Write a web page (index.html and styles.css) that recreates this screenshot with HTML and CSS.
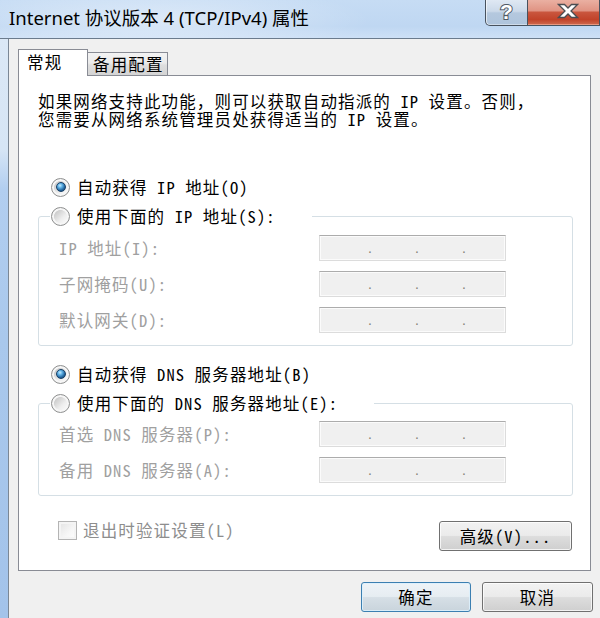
FILE: index.html
```html
<!DOCTYPE html>
<html lang="zh-CN">
<head>
<meta charset="utf-8">
<title>Internet 协议版本 4 (TCP/IPv4) 属性</title>
<link rel="stylesheet" href="styles.css">
</head>
<body>
<div class="window">
  <header class="titlebar">
    <div class="title">Internet 协议版本 4 (TCP/IPv4) 属性</div>
    <div class="caption-buttons">
      <div class="cap-btn help"><span class="help-glyph">?</span></div>
      <div class="cap-btn close">
        <svg class="close-x" width="22" height="16" viewBox="0 0 22 16">
          <path d="M1.5,1.5 H7.5 L11,5 L14.5,1.5 H20.5 L14,8 L20.5,14.5 H14.5 L11,11 L7.5,14.5 H1.5 L8,8 Z" fill="#ffffff" stroke="#4a4d52" stroke-width="1.3" stroke-linejoin="miter"/>
        </svg>
      </div>
    </div>
  </header>
  <div class="frame">
    <div class="frame-left"></div>
    <div class="client">
      <div class="tabs">
        <div class="tab active">常规</div>
        <div class="tab inactive">备用配置</div>
      </div>
      <div class="panel">
        <div class="intro">
          <div class="intro-line">如果网络支持此功能，则可以获取自动指派的 IP 设置。否则，</div>
          <div class="intro-line">您需要从网络系统管理员处获得适当的 IP 设置。</div>
        </div>

        <div class="radio standalone first"><span class="radio-box checked"></span><span>自动获得 IP 地址(O)</span></div>
        <fieldset class="group">
          <legend><span class="radio"><span class="radio-box"></span><span>使用下面的 IP 地址(S):</span></span></legend>
          <div class="rows">
            <span class="lbl">IP 地址(I):</span>
            <div class="ip"><span>.</span><span>.</span><span>.</span></div>
            <span class="lbl">子网掩码(U):</span>
            <div class="ip"><span>.</span><span>.</span><span>.</span></div>
            <span class="lbl">默认网关(D):</span>
            <div class="ip"><span>.</span><span>.</span><span>.</span></div>
          </div>
        </fieldset>

        <div class="radio standalone second"><span class="radio-box checked"></span><span>自动获得 DNS 服务器地址(B)</span></div>
        <fieldset class="group dns">
          <legend><span class="radio"><span class="radio-box"></span><span>使用下面的 DNS 服务器地址(E):</span></span></legend>
          <div class="rows">
            <span class="lbl">首选 DNS 服务器(P):</span>
            <div class="ip"><span>.</span><span>.</span><span>.</span></div>
            <span class="lbl">备用 DNS 服务器(A):</span>
            <div class="ip"><span>.</span><span>.</span><span>.</span></div>
          </div>
        </fieldset>

        <div class="bottom-row">
          <div class="check"><span class="check-box"></span><span>退出时验证设置(L)</span></div>
          <div class="btn adv">高级(V)...</div>
        </div>
      </div>
      <div class="buttons">
        <div class="btn ok">确定</div>
        <div class="btn cancel">取消</div>
      </div>
    </div>
  </div>
</div>
</body>
</html>
```
FILE: styles.css
```css
html, body {
  margin: 0;
  padding: 0;
}
body {
  width: 600px;
  height: 618px;
  overflow: hidden;
  background: #f0f0f0;
  font-family: "Noto Sans Mono CJK SC", "Noto Sans CJK SC", sans-serif;
  font-size: 16.5px;
  letter-spacing: 1.15px;
  color: #000;
}

.window {
  display: flex;
  flex-direction: column;
  height: 618px;
}

/* ---------- title bar ---------- */
.titlebar {
  flex: none;
  height: 38px;
  display: flex;
  border-bottom: 1px solid #6b7b8d;
  background:
    radial-gradient(ellipse 220px 34px at 150px 20px, rgba(255,255,255,0.45), rgba(255,255,255,0) 100%),
    linear-gradient(#c6dcf4 0%, #bfd7f2 70%, #cde0f6 100%);
}
.title {
  flex: 1;
  padding-left: 9px;
  font-family: "Noto Sans", "Noto Sans CJK SC", sans-serif;
  font-size: 18.5px;
  line-height: 36px;
  letter-spacing: 0;
  white-space: nowrap;
  color: #000;
}
.caption-buttons {
  display: flex;
  align-self: flex-start;
  height: 26px;
  flex: none;
}
.cap-btn {
  box-sizing: border-box;
  height: 26px;
  border: 1px solid #48525e;
  border-top: none;
}
.help {
  width: 43px;
  border-radius: 0 0 0 5px;
  background: linear-gradient(#dfe8f3 0%, #cbd9e9 45%, #b4c8de 52%, #aec4dc 100%);
  box-shadow: inset 1px 0 0 rgba(255,255,255,0.6), inset 0 -1px 0 rgba(255,255,255,0.4);
  display: flex;
  justify-content: center;
}
.help-glyph {
  font-family: "Liberation Sans", sans-serif;
  font-weight: bold;
  font-size: 21px;
  line-height: 23px;
  letter-spacing: 0;
  color: #ffffff;
  -webkit-text-stroke: 2px #505965;
  paint-order: stroke fill;
}
.close {
  width: 72px;
  border-left: none;
  background: linear-gradient(#eab0a2 0%, #e09484 42%, #c9553d 50%, #c1432a 78%, #cf6a4f 100%);
  box-shadow: inset 0 -1px 0 rgba(255,200,180,0.5);
}
.close-x {
  display: block;
  margin: 3px 0 0 29px;
}

/* ---------- frame ---------- */
.frame {
  flex: 1;
  display: flex;
  min-height: 0;
}
.frame-left {
  width: 8px;
  flex: none;
  background: linear-gradient(#dbe8f6 0px, #d6e5f5 110px, #b2cef0 150px, #a9c8ec 300px, #a3c3ea 100%);
}
.client {
  flex: 1;
  display: flex;
  flex-direction: column;
  border-left: 1px solid #7b8795;
  background: #f0f0f0;
}

/* ---------- tabs ---------- */
.tabs {
  display: flex;
  align-items: flex-end;
  height: 26px;
  margin: 10px 0 0 9px;
}
.tab {
  box-sizing: border-box;
  border: 1px solid #898c95;
  border-bottom: none;
  white-space: nowrap;
}
.tab.active {
  position: relative;
  z-index: 1;
  width: 70px;
  height: 27px;
  margin-bottom: -1px;
  padding-left: 8px;
  line-height: 24px;
  background: #ffffff;
}
.tab.inactive {
  width: 81px;
  height: 23px;
  margin-left: -1px;
  padding-left: 5px;
  line-height: 22px;
  background: linear-gradient(#f3f3f3 0%, #ebebeb 45%, #dedede 55%, #d4d4d4 100%);
}

/* ---------- panel ---------- */
.panel {
  box-sizing: border-box;
  width: 573px;
  height: 496px;
  margin-left: 9px;
  border: 1px solid #898c95;
  background: #ffffff;
  padding: 16px 17px 0 19px;
}
.intro {
  display: flex;
  flex-direction: column;
}
.intro-line {
  height: 18px;
  line-height: 18px;
  white-space: nowrap;
}

.radio {
  display: flex;
  align-items: center;
  gap: 7px;
  height: 22px;
  white-space: nowrap;
}
.radio.standalone {
  margin-left: 13px;
}
.radio.first {
  margin-top: 48px;
}
.radio.second {
  margin-top: 17px;
}
.radio-box {
  box-sizing: border-box;
  flex: none;
  width: 19px;
  height: 19px;
  border-radius: 50%;
  border: 1px solid #8e8f8f;
  background:
    radial-gradient(circle closest-side, rgba(255,255,255,0) 72%, #f6f6f6 80%),
    linear-gradient(135deg, #c4c4c4 15%, #eeeeee 60%, #ffffff 100%);
  display: grid;
  place-items: center;
}
.radio-box.checked::after {
  content: "";
  box-sizing: border-box;
  width: 10px;
  height: 10px;
  border-radius: 50%;
  border: 1px solid #173f66;
  background: radial-gradient(circle at 38% 32%, #c8ecff 0%, #5fb2e6 30%, #23649c 65%, #123a60 100%);
}

/* ---------- group boxes ---------- */
.group {
  margin: 7px 0 0;
  padding: 0;
  border: 1px solid #d5dfe5;
  border-radius: 3px;
  min-width: 0;
}
.group legend {
  margin-left: 11px;
  padding: 0 36px 0 1px;
}
.rows {
  display: grid;
  grid-template-columns: 260px 187px;
  row-gap: 10px;
  align-items: center;
  padding: 8px 0 12px 20px;
}
.group.dns .rows {
  padding-top: 7px;
}
.lbl {
  color: #a0a0a0;
  white-space: nowrap;
}
.ip {
  box-sizing: border-box;
  width: 187px;
  height: 26px;
  border: 1px solid #dcdcdc;
  border-top-color: #acacac;
  background: #f0f0f0;
  box-shadow: inset 0 0 0 1px #fbfbfb;
  display: grid;
  grid-template-columns: 47px 47px 47px;
  padding-left: 48px;
  font-family: "Liberation Sans", sans-serif;
  font-size: 14px;
  line-height: 24px;
  letter-spacing: 0;
  color: #857f78;
}

/* ---------- bottom row ---------- */
.bottom-row {
  display: flex;
  justify-content: space-between;
  align-items: flex-start;
  margin-top: 25px;
}
.check {
  display: flex;
  align-items: center;
  gap: 6px;
  height: 20px;
  margin: -1px 0 0 20px;
  color: #8d8d8d;
  white-space: nowrap;
}
.check-box {
  box-sizing: border-box;
  width: 19px;
  height: 19px;
  border: 1px solid #b4b4b4;
  background: linear-gradient(135deg, #e2e2e2, #f6f6f6 60%, #fdfdfd);
  box-shadow: inset 0 0 0 2px #f4f4f4;
}

/* ---------- buttons ---------- */
.btn {
  box-sizing: border-box;
  height: 30px;
  border: 1px solid #707070;
  border-radius: 3px;
  background: linear-gradient(#f2f2f2 0%, #ebebeb 48%, #dddddd 52%, #cfcfcf 100%);
  box-shadow: inset 0 0 0 1px rgba(255,255,255,0.75);
  display: flex;
  align-items: center;
  justify-content: center;
  white-space: nowrap;
}
.btn.adv {
  width: 133px;
  margin-right: 1px;
}
.buttons {
  display: flex;
  justify-content: flex-end;
  gap: 11px;
  margin-top: 11px;
  padding-right: 7px;
}
.btn.ok {
  width: 110px;
  border-color: #3c7fb1;
  background: linear-gradient(#eef3f7 0%, #e6edf2 48%, #d6dfe6 52%, #c9d4dc 100%);
  box-shadow: inset 0 0 0 1px rgba(220,240,252,0.9);
}
.btn.cancel {
  width: 111px;
}
```
